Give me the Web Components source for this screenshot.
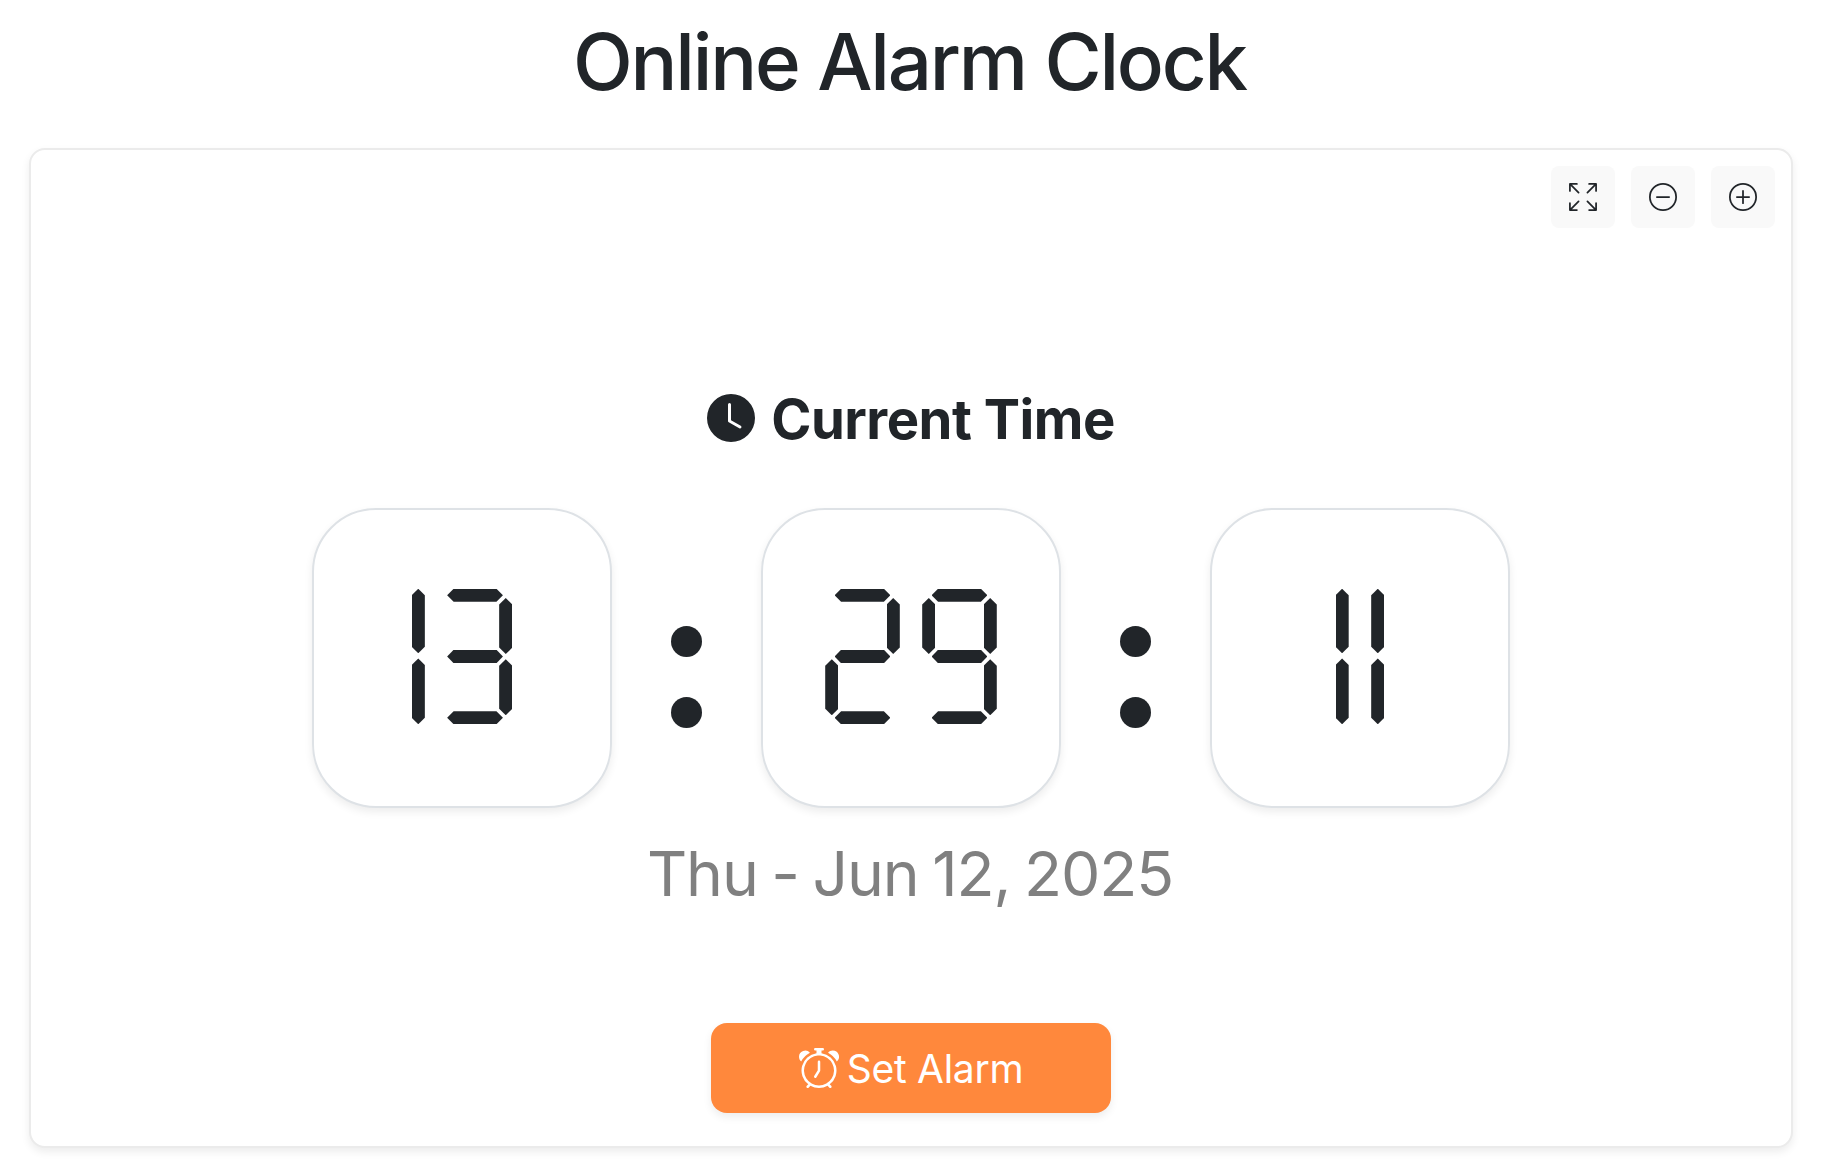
<!DOCTYPE html>
<html lang="en">
<head>
<meta charset="UTF-8">
<meta name="viewport" content="width=device-width, initial-scale=1.0">
<title>Online Alarm Clock</title>
<style>
  body {
    margin: 0;
    background-color: #fff;
    color: #212529;
    font-family: Inter, "Liberation Sans", sans-serif;
  }
</style>
</head>
<body>
<alarm-page>
  <span slot="title">Online Alarm Clock</span>
  <clock-toolbar slot="tools"></clock-toolbar>
  <clock-heading>Current Time</clock-heading>
  <clock-face time="13:29:11"></clock-face>
  <clock-date>Thu - Jun 12, 2025</clock-date>
  <alarm-button>Set Alarm</alarm-button>
</alarm-page>

<script>
const icons = {
  fullscreen: '<path d="M5.828 10.172a.5.5 0 0 0-.707 0l-4.096 4.096V11.5a.5.5 0 0 0-1 0v3.975a.5.5 0 0 0 .5.5H4.5a.5.5 0 0 0 0-1H1.732l4.096-4.096a.5.5 0 0 0 0-.707m4.344 0a.5.5 0 0 1 .707 0l4.096 4.096V11.5a.5.5 0 1 1 1 0v3.975a.5.5 0 0 1-.5.5H11.5a.5.5 0 0 1 0-1h2.768l-4.096-4.096a.5.5 0 0 1 0-.707m0-4.344a.5.5 0 0 0 .707 0l4.096-4.096V4.5a.5.5 0 1 0 1 0V.525a.5.5 0 0 0-.5-.5H11.5a.5.5 0 0 0 0 1h2.768l-4.096 4.096a.5.5 0 0 0 0 .707m-4.344 0a.5.5 0 0 1-.707 0L1.025 1.732V4.5a.5.5 0 0 1-1 0V.525a.5.5 0 0 1 .5-.5H4.5a.5.5 0 0 1 0 1H1.732l4.096 4.096a.5.5 0 0 1 0 .707"/>',
  minus: '<path d="M8 15A7 7 0 1 1 8 1a7 7 0 0 1 0 14m0 1A8 8 0 1 0 8 0a8 8 0 0 0 0 16"/><path d="M4 8a.5.5 0 0 1 .5-.5h7a.5.5 0 0 1 0 1h-7A.5.5 0 0 1 4 8"/>',
  plus: '<path d="M8 15A7 7 0 1 1 8 1a7 7 0 0 1 0 14m0 1A8 8 0 1 0 8 0a8 8 0 0 0 0 16"/><path d="M8 4a.5.5 0 0 1 .5.5v3h3a.5.5 0 0 1 0 1h-3v3a.5.5 0 0 1-1 0v-3h-3a.5.5 0 0 1 0-1h3v-3A.5.5 0 0 1 8 4"/>',
  clock: '<path d="M16 8A8 8 0 1 1 0 8a8 8 0 0 1 16 0M8 3.5a.5.5 0 0 0-1 0V9a.5.5 0 0 0 .252.434l3.5 2a.5.5 0 0 0 .496-.868L8 8.71z"/>',
  alarm: '<path d="M8.5 5.5a.5.5 0 0 0-1 0v3.362l-1.429 2.38a.5.5 0 1 0 .858.515l1.5-2.5A.5.5 0 0 0 8.5 9z"/><path d="M6.5 0a.5.5 0 0 0 0 1H7v1.07a7.001 7.001 0 0 0-3.273 12.474l-.602.602a.5.5 0 0 0 .707.708l.746-.746A6.97 6.97 0 0 0 8 16a6.97 6.97 0 0 0 3.422-.892l.746.746a.5.5 0 0 0 .707-.708l-.601-.602A7.001 7.001 0 0 0 9 2.07V1h.5a.5.5 0 0 0 0-1zm1.038 3.018a6 6 0 0 1 .924 0 6 6 0 1 1-.924 0M0 3.5c0 .753.333 1.429.86 1.887A8.04 8.04 0 0 1 4.387 1.86 2.5 2.5 0 0 0 0 3.5M13.5 1c-.753 0-1.429.333-1.887.86a8.04 8.04 0 0 1 3.527 3.527A2.5 2.5 0 0 0 13.5 1"/>'
};

class ClockIcon extends HTMLElement {
  connectedCallback() {
    this.attachShadow({ mode: 'open' });
    this.shadowRoot.innerHTML = `
      <style>
        :host { display: block; flex: none; width: 28px; height: 28px; }
        svg { display: block; width: 100%; height: 100%; }
      </style>
      <svg viewBox="0 0 16 16" fill="currentColor">${icons[this.getAttribute('name')]}</svg>
    `;
  }
}
customElements.define('clock-icon', ClockIcon);

class ClockToolbar extends HTMLElement {
  connectedCallback() {
    this.attachShadow({ mode: 'open' });
    this.shadowRoot.innerHTML = `
      <style>
        :host { display: flex; justify-content: flex-end; gap: 16px; }
        button {
          display: flex;
          align-items: center;
          justify-content: center;
          width: 64px;
          height: 62px;
          padding: 0;
          border: none;
          border-radius: 8px;
          background-color: #f9f9f9;
          color: #212529;
          cursor: pointer;
        }
        button:hover { background-color: #e9ecef; }
      </style>
      <button aria-label="Fullscreen"><clock-icon name="fullscreen"></clock-icon></button>
      <button aria-label="Smaller"><clock-icon name="minus"></clock-icon></button>
      <button aria-label="Larger"><clock-icon name="plus"></clock-icon></button>
    `;
  }
}
customElements.define('clock-toolbar', ClockToolbar);

class ClockHeading extends HTMLElement {
  connectedCallback() {
    this.attachShadow({ mode: 'open' });
    this.shadowRoot.innerHTML = `
      <style>
        :host { display: block; margin-top: 156px; }
        h2 {
          display: flex;
          align-items: center;
          justify-content: center;
          gap: 16px;
          height: 68px;
          margin: 0;
          font-size: 54.4px;
          font-weight: 700;
          line-height: 68px;
          letter-spacing: -0.5px;
          white-space: nowrap;
        }
        clock-icon { width: 48px; height: 48px; }
        span { padding-top: 2px; }
      </style>
      <h2><clock-icon name="clock"></clock-icon><span><slot></slot></span></h2>
    `;
  }
}
customElements.define('clock-heading', ClockHeading);

// segments: a top, b/c right, d bottom, e/f left, g middle
// h/i are the taller pair used by the narrow 1
const segments = {
  0: 'abcdef', 1: 'hi', 2: 'abged', 3: 'abgcd', 4: 'fgbc',
  5: 'afgcd', 6: 'afgedc', 7: 'abc', 8: 'abcdefg', 9: 'abcdfg'
};

class SegmentDigit extends HTMLElement {
  connectedCallback() {
    const value = this.getAttribute('value');
    this.attachShadow({ mode: 'open' });
    this.shadowRoot.innerHTML = `
      <style>
        :host { display: grid; width: 74.6px; height: 135.4px; }
        :host([value="1"]) { width: 13.3px; }
        :host([value="3"]) { margin-left: -9.6px; }
        i { grid-area: 1 / 1; background-color: currentColor; }
        .a, .d, .g {
          width: 55.8px;
          height: 13px;
          justify-self: center;
          clip-path: polygon(0 50%, 6.5px 0, calc(100% - 6.5px) 0, 100% 50%, calc(100% - 6.5px) 100%, 6.5px 100%);
        }
        .g { align-self: center; height: 13.4px; }
        .d { align-self: end; }
        .b, .c, .e, .f, .h, .i {
          width: 13.2px;
          height: 56px;
          clip-path: polygon(50% 0, 100% 6.5px, 100% calc(100% - 6.5px), 50% 100%, 0 calc(100% - 6.5px), 0 6.5px);
        }
        .b, .c { justify-self: end; }
        .b, .f { margin-top: 9.3px; }
        .c, .e { align-self: end; margin-bottom: 9px; }
        .h { height: 64.4px; }
        .i { height: 65.8px; align-self: end; }
      </style>
      ${[...segments[value]].map(s => `<i class="${s}"></i>`).join('')}
    `;
  }
}
customElements.define('segment-digit', SegmentDigit);

class ClockFace extends HTMLElement {
  connectedCallback() {
    const time = this.getAttribute('time');
    const tiles = time.split(':').map(part => `
      <div class="tile">${[...part].map(n => `<segment-digit value="${n}"></segment-digit>`).join('')}</div>
    `);
    this.attachShadow({ mode: 'open' });
    this.shadowRoot.innerHTML = `
      <style>
        :host { display: block; margin-top: 56px; }
        .face { display: flex; justify-content: center; }
        .tile {
          box-sizing: border-box;
          display: flex;
          align-items: center;
          justify-content: center;
          gap: 22.4px;
          width: 300px;
          height: 300px;
          padding-bottom: 3px;
          border: 2px solid #dee2e6;
          border-radius: 64px;
          background-color: #fff;
          box-shadow: 0 4px 8px rgba(0, 0, 0, 0.075);
        }
        .colon {
          box-sizing: border-box;
          display: flex;
          flex-direction: column;
          align-items: center;
          justify-content: center;
          gap: 39.4px;
          width: 149px;
          height: 300px;
          padding-top: 38px;
        }
        .colon b {
          width: 31px;
          height: 31px;
          border-radius: 50%;
          background-color: currentColor;
        }
      </style>
      <div class="face" role="img" aria-label="${time}">
        ${tiles.join('<div class="colon"><b></b><b></b></div>')}
      </div>
    `;
  }
}
customElements.define('clock-face', ClockFace);

class ClockDate extends HTMLElement {
  connectedCallback() {
    this.attachShadow({ mode: 'open' });
    this.shadowRoot.innerHTML = `
      <style>
        :host {
          display: block;
          margin-top: 26px;
          padding-right: 2px;
          color: #808080;
          font-size: 62.4px;
          line-height: 80px;
          letter-spacing: -1.05px;
          word-spacing: -3px;
          text-align: center;
          white-space: nowrap;
        }
      </style>
      <slot></slot>
    `;
  }
}
customElements.define('clock-date', ClockDate);

class AlarmButton extends HTMLElement {
  connectedCallback() {
    this.attachShadow({ mode: 'open' });
    this.shadowRoot.innerHTML = `
      <style>
        :host { display: flex; justify-content: center; margin-top: 109px; }
        button {
          display: flex;
          align-items: center;
          justify-content: center;
          gap: 8px;
          width: 400px;
          height: 90px;
          padding: 0;
          border: none;
          border-radius: 16px;
          background-color: #ff883c;
          box-shadow: 0 4px 8px rgba(0, 0, 0, 0.075);
          color: #fff;
          font-family: inherit;
          font-size: 39px;
          line-height: 60px;
          letter-spacing: -0.3px;
          white-space: nowrap;
          cursor: pointer;
        }
        clock-icon { width: 40px; height: 40px; }
        span { padding-top: 1px; }
      </style>
      <button><clock-icon name="alarm"></clock-icon><span><slot></slot></span></button>
    `;
  }
}
customElements.define('alarm-button', AlarmButton);

class AlarmPage extends HTMLElement {
  connectedCallback() {
    this.attachShadow({ mode: 'open' });
    this.shadowRoot.innerHTML = `
      <style>
        :host { display: flow-root; height: 1164px; overflow: hidden; }
        h1 {
          height: 96px;
          margin: 14px 0 38px;
          padding-right: 3px;
          font-size: 78px;
          font-weight: 500;
          line-height: 96px;
          letter-spacing: -2.2px;
          text-align: center;
          white-space: nowrap;
        }
        main {
          box-sizing: border-box;
          height: 1000px;
          margin: 0 29px;
          padding: 16px;
          border: 2px solid #ebebeb;
          border-radius: 16px;
          background-color: #fff;
          box-shadow: 0 4px 8px rgba(0, 0, 0, 0.075);
        }
      </style>
      <h1><slot name="title"></slot></h1>
      <main>
        <slot name="tools"></slot>
        <slot></slot>
      </main>
    `;
  }
}
customElements.define('alarm-page', AlarmPage);
</script>
</body>
</html>
